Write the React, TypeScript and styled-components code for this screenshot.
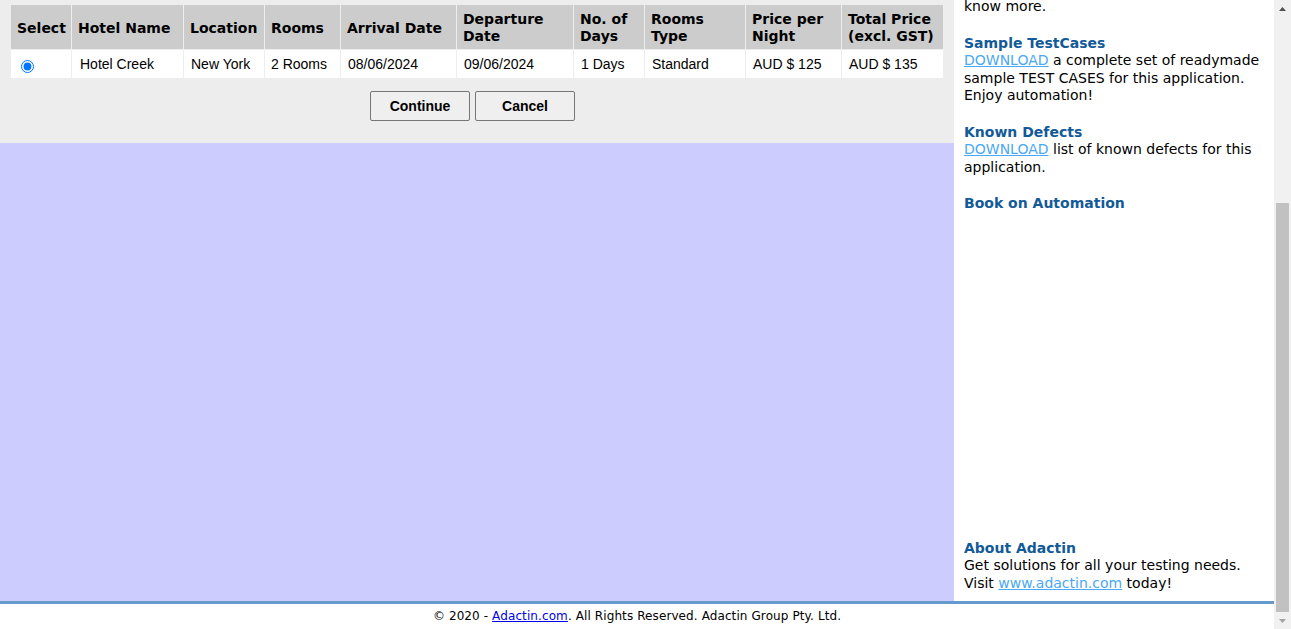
import React from "react"
import styled, { createGlobalStyle } from "styled-components"

const GlobalStyle = createGlobalStyle`
    html, body {
        margin: 0;
        padding: 0;
        overflow: hidden;
        background: #fff;
    }
`

const verdana = `Verdana, "DejaVu Sans", sans-serif`
const arial = `"Liberation Sans", Arial, sans-serif`

const Window = styled.div`
    width: 1291px;
    height: 629px;
    display: flex;
    overflow: hidden;
`

const Viewport = styled.div`
    flex: 1;
    display: flex;
    flex-direction: column;
    min-width: 0;
`

const Content = styled.div`
    height: 601px;
    display: flex;
`

const Main = styled.div`
    width: 954px;
    display: flex;
    flex-direction: column;
`

const ResultPanel = styled.div`
    height: 143px;
    background: #ededed;
    padding: 4px 0 0 10px;
    box-sizing: border-box;
`

const Filler = styled.div`
    flex: 1;
    background: #ccccff;
`

const Table = styled.table`
    border-collapse: separate;
    border-spacing: 1px;
    table-layout: fixed;
    width: 934px;
`

const Th = styled.th<{ $w: number }>`
    width: ${p => p.$w}px;
    height: 44px;
    box-sizing: border-box;
    padding: 2px 6px 0 6px;
    background: #cccccc;
    color: #000;
    font-family: ${verdana};
    font-size: 14px;
    font-weight: bold;
    line-height: 17px;
    text-align: left;
    vertical-align: middle;
`

const Td = styled.td<{ $indent?: number }>`
    height: 28px;
    box-sizing: border-box;
    padding: 0 0 0 ${p => p.$indent ?? 6}px;
    background: #fff;
    color: #000;
    font-family: ${arial};
    font-size: 14px;
    vertical-align: middle;
    white-space: nowrap;
`

const Radio = styled.input`
    width: 13px;
    height: 13px;
    margin: 3px 0 0 4px;
    vertical-align: middle;
`

const ButtonRow = styled.div`
    display: flex;
    justify-content: center;
    gap: 5px;
    margin: 12px 0 0 0;
    padding-right: 19px;
`

const Button = styled.button`
    width: 100px;
    height: 30px;
    background: #efefef;
    border: 1px solid #767676;
    border-radius: 2px;
    font-family: ${arial};
    font-size: 14px;
    font-weight: bold;
    color: #000;
`

const Sidebar = styled.div`
    width: 320px;
    background: #fff;
    padding: 0 10px;
    box-sizing: border-box;
    display: flex;
    flex-direction: column;
    font-family: ${verdana};
    font-size: 14px;
    line-height: 17.5px;
    color: #000;
    overflow: hidden;
`

const Block = styled.div`
    margin-bottom: 19px;
`

const FirstBlock = styled(Block)`
    margin-top: -2px;
`

const Heading = styled.div`
    color: #135a98;
    font-weight: bold;
`

const SideLink = styled.a`
    color: #4aa8f5;
    text-decoration: underline;
`

const Spacer = styled.div`
    flex: 1;
`

const BottomBlock = styled.div`
    padding-bottom: 9px;
`

const Rule = styled.div`
    height: 3px;
    background: #6699cc;
`

const Footer = styled.div`
    flex: 1;
    display: flex;
    justify-content: center;
    align-items: center;
    padding-bottom: 1px;
    font-family: ${verdana};
    font-size: 12px;
    letter-spacing: 0.1px;
    color: #000;
    background: #fff;
`

const FooterLink = styled.a`
    color: #0000ee;
    text-decoration: underline;
`

const Scrollbar = styled.div`
    width: 17px;
    background: #f1f1f1;
    display: flex;
    flex-direction: column;
`

const Arrow = styled.div`
    height: 17px;
    display: flex;
    align-items: center;
    justify-content: center;
`

const Track = styled.div`
    flex: 1;
    display: flex;
    flex-direction: column;
    justify-content: flex-end;
    padding: 0 2px;
`

const Thumb = styled.div`
    height: 409px;
    background: #c1c1c1;
`

const columns = [
    { title: "Select", w: 60 },
    { title: "Hotel Name", w: 111 },
    { title: "Location", w: 80 },
    { title: "Rooms", w: 75 },
    { title: "Arrival Date", w: 115 },
    { title: "Departure Date", w: 116 },
    { title: "No. of Days", w: 70 },
    { title: "Rooms Type", w: 100 },
    { title: "Price per Night", w: 95 },
    { title: "Total Price (excl. GST)", w: 101 },
]

const row = ["Hotel Creek", "New York", "2 Rooms", "08/06/2024", "09/06/2024", "1 Days", "Standard", "AUD $ 125", "AUD $ 135"]
const indents = [8, 7, 6, 7, 7, 7, 7, 7, 7]

export default function App() {
    return (
        <>
            <GlobalStyle />
            <Window>
                <Viewport>
                    <Content>
                        <Main>
                            <ResultPanel>
                                <Table>
                                    <thead>
                                        <tr>
                                            {columns.map(c => (
                                                <Th key={c.title} $w={c.w}>{c.title}</Th>
                                            ))}
                                        </tr>
                                    </thead>
                                    <tbody>
                                        <tr>
                                            <Td $indent={6}><Radio type="radio" name="radiobutton" defaultChecked /></Td>
                                            {row.map((v, i) => (
                                                <Td key={i} $indent={indents[i]}>{v}</Td>
                                            ))}
                                        </tr>
                                    </tbody>
                                </Table>
                                <ButtonRow>
                                    <Button>Continue</Button>
                                    <Button>Cancel</Button>
                                </ButtonRow>
                            </ResultPanel>
                            <Filler />
                        </Main>
                        <Sidebar>
                            <FirstBlock>know more.</FirstBlock>
                            <Block>
                                <Heading>Sample TestCases</Heading>
                                <SideLink href="#">DOWNLOAD</SideLink> a complete set of readymade sample TEST CASES for this application. Enjoy automation!
                            </Block>
                            <Block>
                                <Heading>Known Defects</Heading>
                                <SideLink href="#">DOWNLOAD</SideLink> list of known defects for this application.
                            </Block>
                            <Block>
                                <Heading>Book on Automation</Heading>
                            </Block>
                            <Spacer />
                            <BottomBlock>
                                <Heading>About Adactin</Heading>
                                Get solutions for all your testing needs.<br />
                                Visit <SideLink href="#">www.adactin.com</SideLink> today!
                            </BottomBlock>
                        </Sidebar>
                    </Content>
                    <Rule />
                    <Footer>
                        <span>© 2020 - <FooterLink href="#">Adactin.com</FooterLink>. All Rights Reserved. Adactin Group Pty. Ltd.</span>
                    </Footer>
                </Viewport>
                <Scrollbar>
                    <Arrow>
                        <svg width="7" height="4" viewBox="0 0 7 4"><path d="M0 4 L3.5 0 L7 4 Z" fill="#505050" /></svg>
                    </Arrow>
                    <Track>
                        <Thumb />
                    </Track>
                    <Arrow>
                        <svg width="7" height="4" viewBox="0 0 7 4"><path d="M0 0 L3.5 4 L7 0 Z" fill="#a3a3a3" /></svg>
                    </Arrow>
                </Scrollbar>
            </Window>
        </>
    )
}
